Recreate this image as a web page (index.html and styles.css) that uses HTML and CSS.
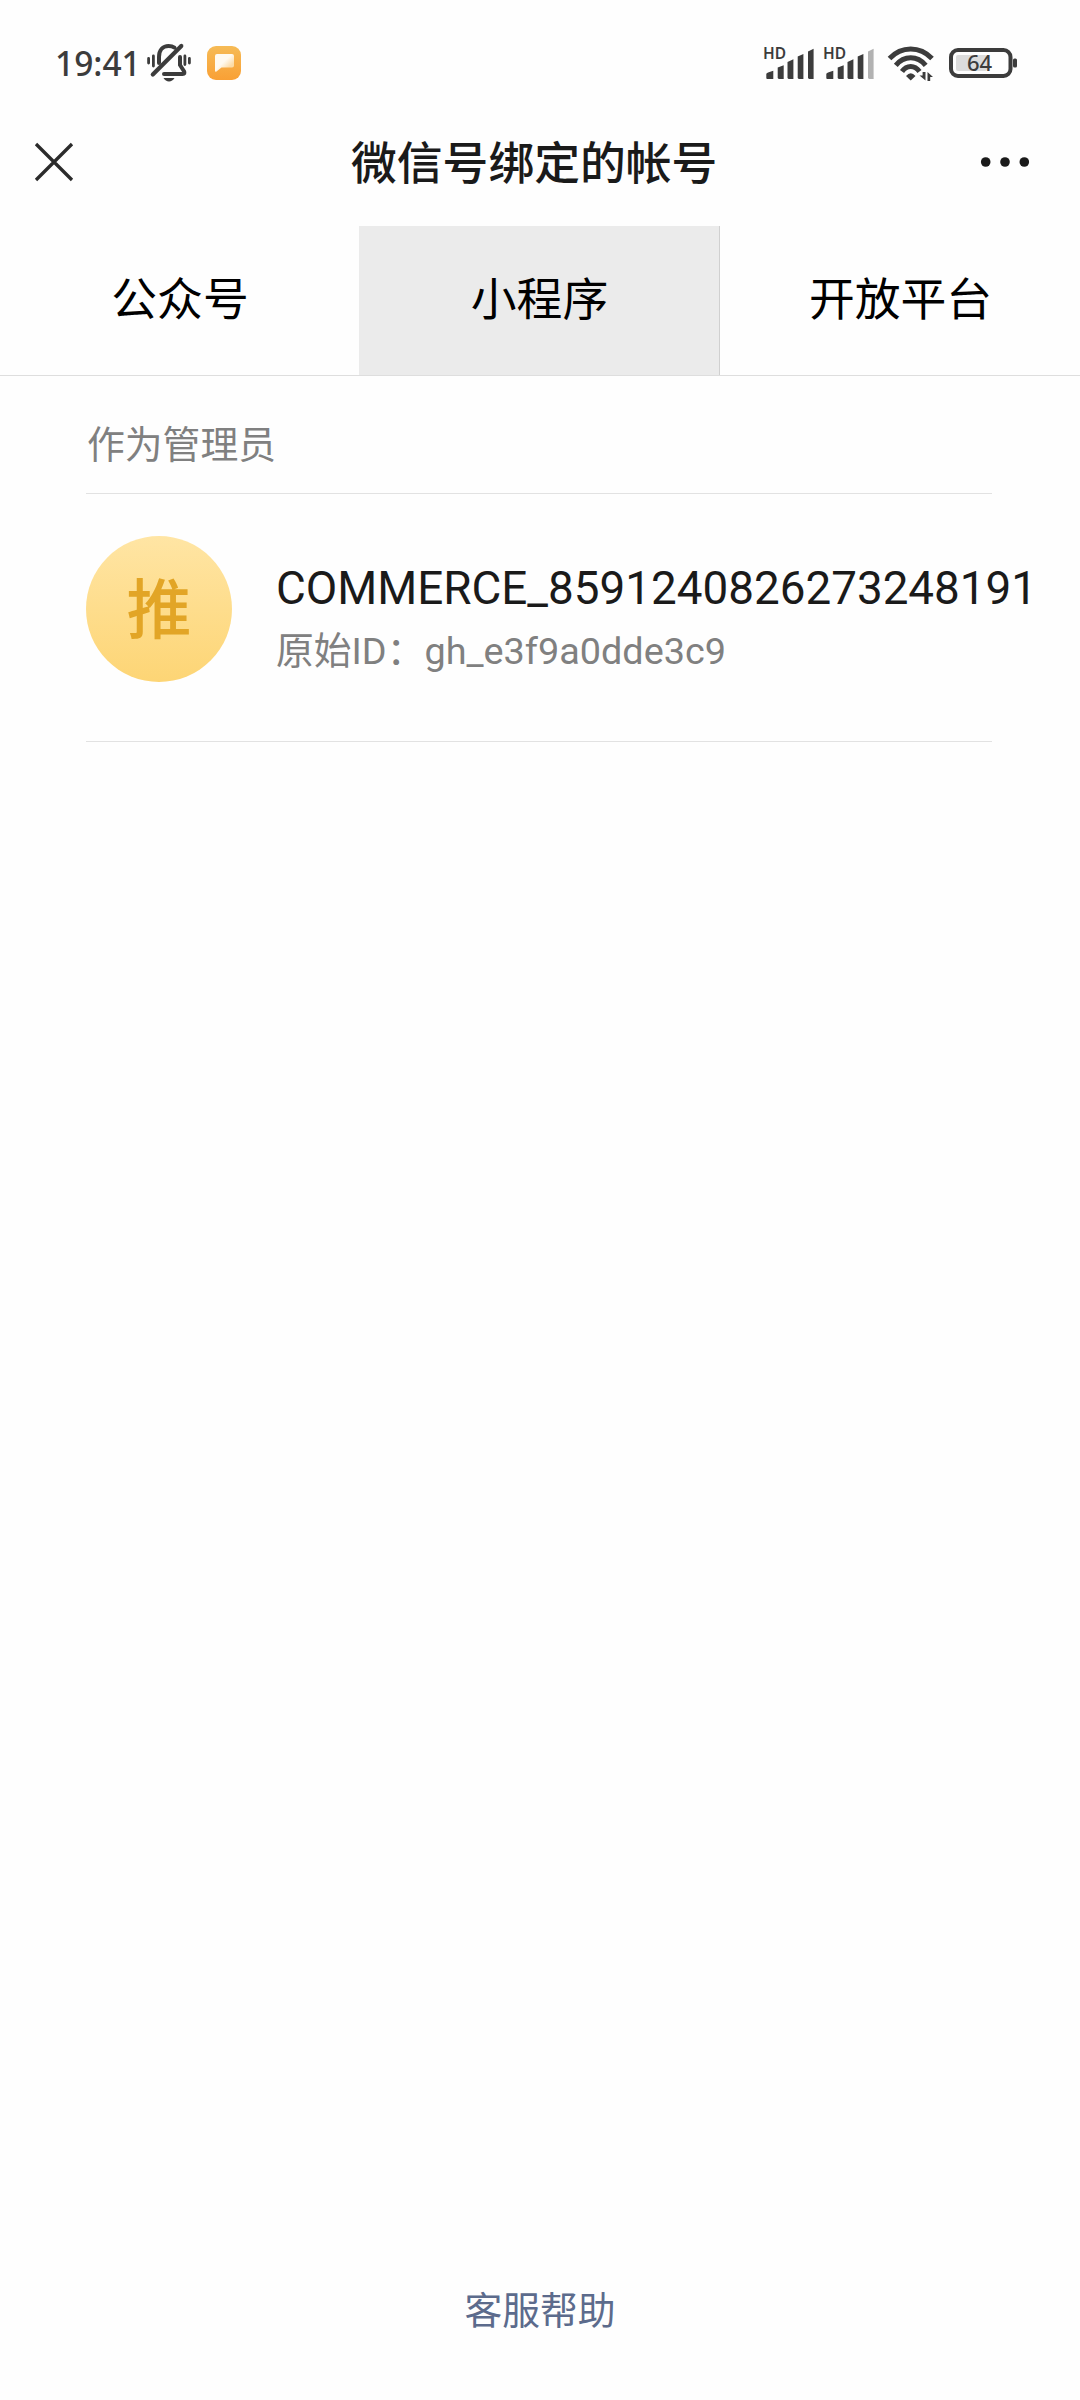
FILE: index.html
```html
<!DOCTYPE html>
<html lang="zh-CN">
<head>
<meta charset="utf-8">
<title>微信号绑定的帐号</title>
<link rel="stylesheet" href="styles.css">
</head>
<body>

<div class="status">
    <span class="time">19:41</span>
    <svg class="bell" width="46" height="40" viewBox="0 0 46 40" fill="none" stroke="#3c3c3c" stroke-width="4" stroke-linecap="round">
        <path d="M13 20V14C13 7 17 3 22.5 3C25 3 27 3.6 28.5 4.6"/>
        <path d="M34 14V22L38 28.2Q39.500 31 36.500 31H18"/>
        <path d="M6.8 31.5L35.3 3" stroke-width="4.2"/>
        <path d="M2.6 15.5V20M7.4 13V23M38.9 13V21.500M43.4 15.5V20" stroke-width="2.8"/>
        <path d="M17.5 35H28.5Q26.5 38.4 23 38.4T17.5 35Z" fill="#3c3c3c" stroke="none"/>
    </svg>
    <svg class="app" width="34" height="34" viewBox="0 0 34 34">
        <defs>
            <linearGradient id="orange" x1="0" y1="0" x2="0" y2="1">
                <stop offset="0" stop-color="#f6bb56"/>
                <stop offset="1" stop-color="#f9a035"/>
            </linearGradient>
            <linearGradient id="bubble" x1="0" y1="0" x2="1" y2="1">
                <stop offset=".45" stop-color="#fffaf0"/>
                <stop offset=".75" stop-color="#fcdca8"/>
            </linearGradient>
        </defs>
        <rect width="34" height="34" rx="9" fill="url(#orange)"/>
        <path d="M10 8H25Q27 8 27 10V19.5Q27 21.5 25 21.5H14.5L9.5 25.5Q8 26.5 8 24.5V10Q8 8 10 8Z" fill="url(#bubble)"/>
    </svg>

    <svg class="signal" width="52" height="46" viewBox="0 -6 52 46" fill="#3c3c3c">
        <text class="hd" x="0" y="13">HD</text>
        <path d="M3.3 32V28Q3.3 26.7 10.3 24.7V33H4.3Q3.3 33 3.3 32ZM14.7 32V21.5L20.7 19.3V33H15.7ZM24.5 32V16L30.4 13.3V33H25.5ZM34.7 32V10.5L40.4 8V33H35.7ZM45 32V5.5L50.6 2.8V33H46Z"/>
    </svg>
    <svg class="signal second" width="52" height="46" viewBox="0 -6 52 46" fill="#3c3c3c">
        <text class="hd" x="0" y="13">HD</text>
        <path d="M3.3 32V28Q3.3 26.7 10.3 24.7V33H4.3Q3.3 33 3.3 32ZM14.7 32V21.5L20.7 19.3V33H15.7ZM24.5 32V16L30.4 13.3V33H25.5ZM34.7 32V10.5L40.4 8V33H35.7Z"/>
        <path d="M45 32V5.5L50.6 2.8V33H46Z" fill="#b2b2b2"/>
    </svg>
    <svg class="wifi" width="48" height="38" viewBox="0 0 48 38" fill="none" stroke="#3c3c3c" stroke-width="5">
        <path d="M2.5 14.5Q11.5 5 23.7 5T45 14.5"/>
        <path d="M8.8 21.3Q15 13.8 23.7 13.8T38.7 21.3"/>
        <path d="M15 27.5Q18.5 22.5 23.7 22.5T32.5 27.5"/>
        <path d="M19 32Q23.7 26.5 28.5 32L23.7 36.5Z" fill="#3c3c3c" stroke="none"/>
        <path d="M38.5 28V36.6L32.5 31.5H35.600V28ZM40.5 37V28L46 33H43.200V37Z" fill="#3c3c3c" stroke="none"/>
    </svg>
    <svg class="battery" width="70" height="32" viewBox="0 0 70 32">
        <rect x="2" y="3" width="59.5" height="26" rx="7" fill="none" stroke="#3c3c3c" stroke-width="4"/>
        <rect x="7" y="8" width="31" height="16" rx="2" fill="#dcdcdc"/>
        <rect x="64" y="11.5" width="4" height="9" rx="1.5" fill="#3c3c3c"/>
        <text class="level" x="18" y="24">64</text>
    </svg>
</div>

<div class="nav">
    <svg class="close" width="40" height="40" viewBox="0 0 40 40" stroke="#2b2b2b" stroke-width="3.3">
        <path d="M2 2L38 38M38 2L2 38"/>
    </svg>
    <h1>微信号绑定的帐号</h1>
    <svg class="more" width="50" height="10" viewBox="0 0 50 10" fill="#1a1a1a">
        <circle cx="5.7" cy="5" r="4.8"/>
        <circle cx="25" cy="5" r="4.8"/>
        <circle cx="44.3" cy="5" r="4.8"/>
    </svg>
</div>

<div class="tabs">
    <div class="tab">公众号</div>
    <div class="tab active">小程序</div>
    <div class="tab">开放平台</div>
</div>

<div class="list">
    <h2>作为管理员</h2>
    <div class="item">
        <div class="avatar">推</div>
        <div class="info">
            <p class="name">COMMERCE_8591240826273248191</p>
            <p class="id">原始ID：gh_e3f9a0dde3c9</p>
        </div>
    </div>
</div>

<div class="footer">客服帮助</div>

</body>
</html>
```
FILE: styles.css
```css
* {
    box-sizing: border-box;
}
body {
    margin: 0;
    height: 2400px;
    display: flex;
    flex-direction: column;
    background: #fefefe;
    font-family: Roboto, "Noto Sans CJK SC", sans-serif;
}
h1, h2, p {
    margin: 0;
    font-weight: 400;
}
svg {
    display: block;
    flex: none;
}

.status {
    height: 100px;
    padding: 26px 61px 0 55px;
    display: flex;
    align-items: center;
}
.time {
    width: 91px;
    font: 500 33.5px "Noto Sans", sans-serif;
    color: #3c3c3c;
}
.app {
    margin-left: 15px;
}
.signal {
    margin-left: auto;
}
.signal.second {
    margin-left: 8px;
}
.hd {
    font: 600 15.5px "Noto Sans", sans-serif;
}
.wifi {
    margin-left: 12px;
}
.battery {
    margin-left: 14px;
}
.level {
    font: 500 22px "Noto Sans", sans-serif;
    fill: #3c3c3c;
}

.nav {
    height: 126px;
    padding: 0 50px 3px 34px;
    display: flex;
    align-items: center;
}
.nav h1 {
    margin-left: 277px;
    padding-top: 7px;
    font-size: 45.8px;
    font-weight: 500;
    line-height: 60px;
    color: #1a1a1a;
}
.more {
    margin-left: auto;
}

.tabs {
    height: 150px;
    display: grid;
    grid-template-columns: 359px 361px 360px;
    border-bottom: 1px solid #dedede;
}
.tab {
    padding: 0 0 9px 1px;
    display: flex;
    align-items: center;
    justify-content: center;
    font-size: 45.8px;
    color: #000;
}
.tab.active {
    background: #ebebeb;
    border-right: 1px solid #d0d0d0;
}

.list {
    padding: 0 88px 0 86px;
}
.list h2 {
    height: 118px;
    padding: 41px 0 0 1px;
    font-size: 37.8px;
    line-height: 56px;
    color: #808080;
    border-bottom: 1px solid #e2e2e2;
}
.item {
    height: 248px;
    padding-top: 42px;
    display: flex;
    border-bottom: 1px solid #e2e2e2;
}
.avatar {
    flex: none;
    width: 146px;
    height: 146px;
    border-radius: 50%;
    background: linear-gradient(#ffe5a4, #fdd575);
    color: #e2a526;
    font-size: 65px;
    font-weight: 500;
    line-height: 151px;
    text-align: center;
}
.info {
    margin-left: 44px;
    padding-top: 23px;
}
.name {
    font-size: 45.8px;
    line-height: 60px;
    color: #1a1a1a;
    white-space: nowrap;
}
.id {
    font-size: 37.8px;
    line-height: 64px;
    color: #808080;
}

.footer {
    margin-top: auto;
    height: 117px;
    font-size: 37.8px;
    line-height: 56px;
    text-align: center;
    color: #5c6b8c;
}
```
